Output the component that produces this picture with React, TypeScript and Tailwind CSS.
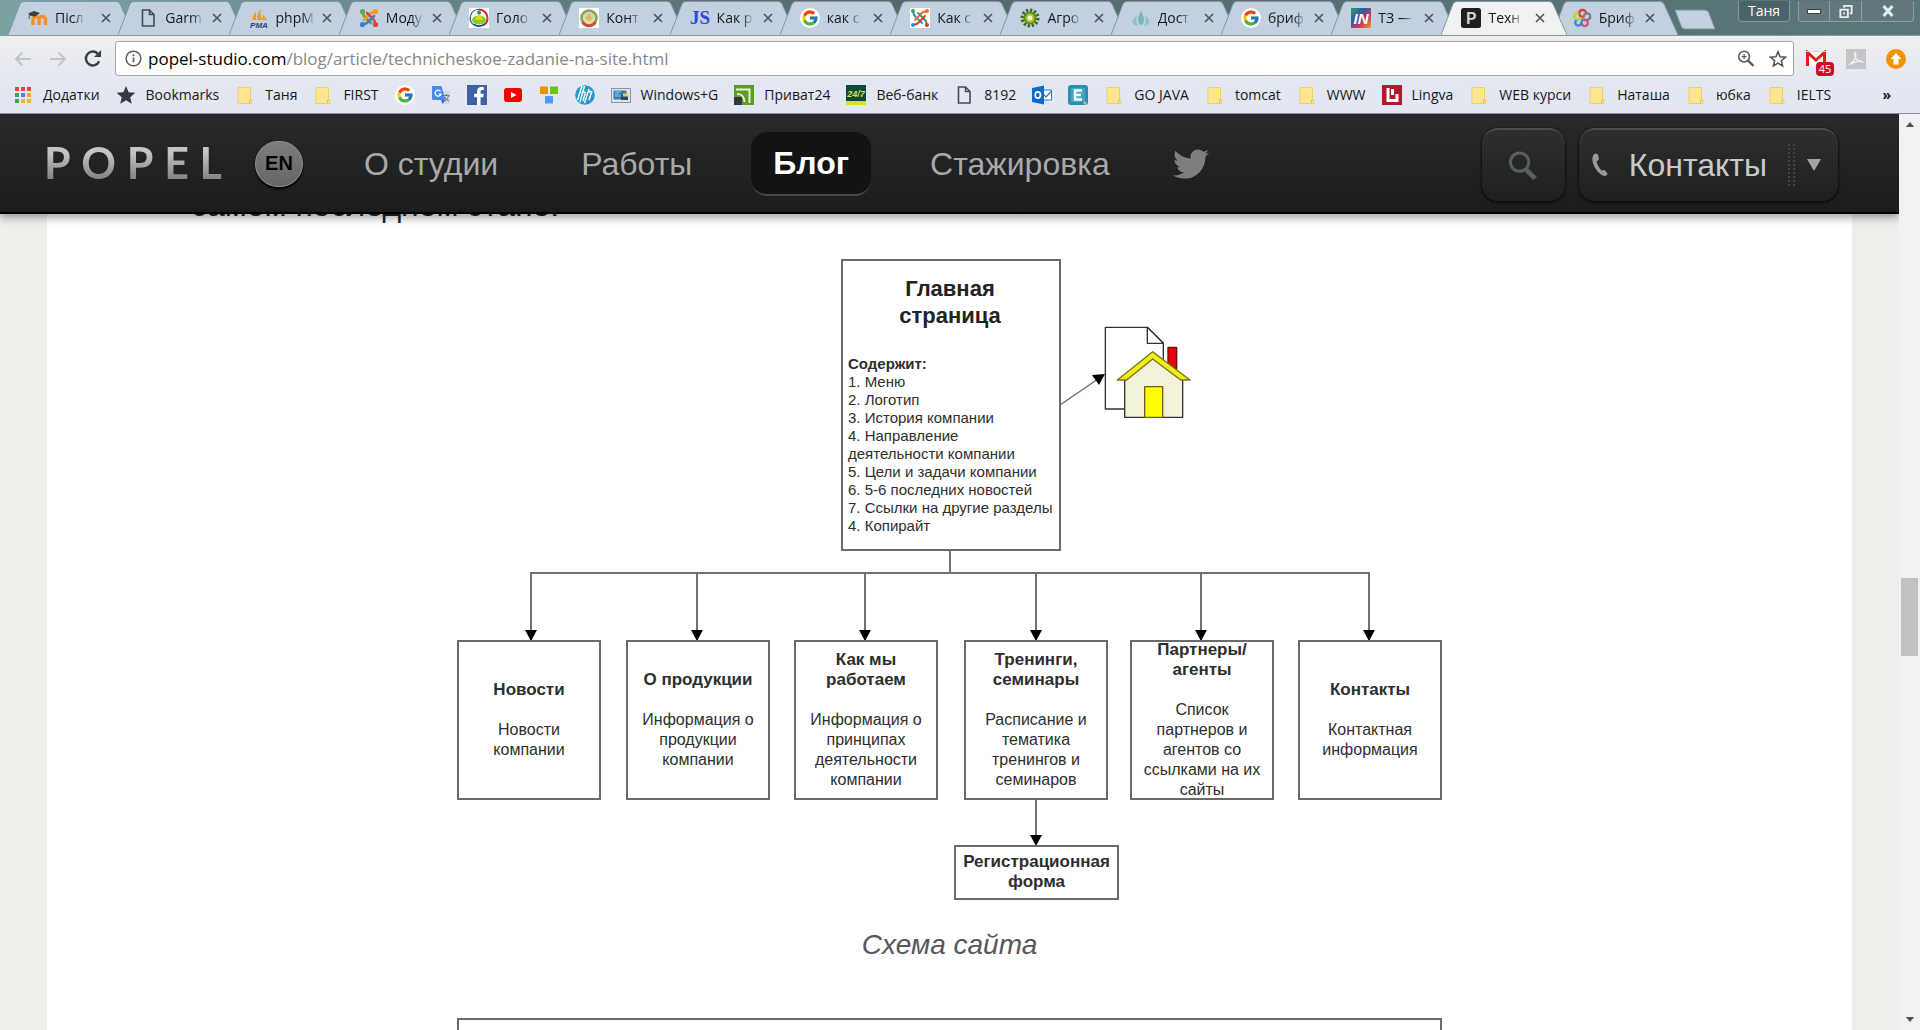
import type { ReactNode } from "react";
import { FcGoogle } from "react-icons/fc";
import { FaFacebookF, FaTwitter } from "react-icons/fa";

/* ---------- small site icons ---------- */

function Svg({ children, box = "0 0 20 20" }: { children: ReactNode; box?: string }) {
  return (
    <svg viewBox={box} className="h-5 w-5 shrink-0" aria-hidden="true">
      {children}
    </svg>
  );
}

const Moodle = () => (
  <Svg>
    <path d="M5 17V11.500C5 7.500 11 7.500 11 11.500V17M11 11.500C11 7.500 17.500 7.500 17.500 11.500V17" fill="none" stroke="#f68e2c" strokeWidth="3.400" />
    <path d="M0 5.500 6 3l6 2-5 3.500L3 8z" fill="#3d3d3d" />
    <path d="M1.500 6 1 11" stroke="#555" strokeWidth="1" />
  </Svg>
);

const Doc = () => (
  <Svg>
    <path d="M4.500 2h7l4.500 4.500V18H4.500zM11.500 2v4.500H16" fill="none" stroke="#454b52" strokeWidth="1.600" />
  </Svg>
);

const Pma = () => (
  <Svg>
    <path d="M3 12C4 7 6 5 7 4v8zM8 12c0-6 2-9 4-11-1 5 0 8 1 11zM13 12c0-3 1-5 2-6 0 3 2 4 3 6z" fill="#f7972b" />
    <text x="10" y="19.500" textAnchor="middle" className="fill-[#33397a] font-['Liberation_Sans'] text-[8px] font-bold italic">PMA</text>
  </Svg>
);

const Joomla = () => (
  <Svg>
    <g fill="none" strokeWidth="2.600" strokeLinecap="round">
      <path d="M4 4.500C4 8 5.500 8.500 12 15" stroke="#5fa843" />
      <path d="M15.500 4C12 4 11.500 5.500 5 12" stroke="#f59a23" />
      <path d="M16 15.500C16 12 14.500 11.500 8 5" stroke="#e8432e" />
      <path d="M4.500 16C8 16 8.500 14.500 15 8" stroke="#3b7fc4" />
    </g>
    <circle cx="3.500" cy="3.500" r="2.600" fill="#5fa843" />
    <circle cx="16.500" cy="3.500" r="2.600" fill="#f59a23" />
    <circle cx="16.500" cy="16.500" r="2.600" fill="#e8432e" />
    <circle cx="3.500" cy="16.500" r="2.600" fill="#3b7fc4" />
  </Svg>
);

const JoomlaWhite = () => (
  <Svg>
    <path d="M0 0h20v20H0z" fill="#fff" />
    <g fill="none" strokeWidth="1.900" strokeLinecap="round">
      <path d="M3.500 4.500C3.500 8 5 8 12 15" stroke="#2f8fd0" />
      <path d="M15.500 3.500C12 3.500 12 5 5 12" stroke="#ef6b2f" />
      <path d="M16.500 15.500C16.500 12 15 12 8 5" stroke="#3f9e50" />
      <path d="M4.500 16.500C8 16.500 8 15 15 8" stroke="#d83a2d" />
    </g>
    <circle cx="3" cy="3" r="2" fill="#3f9e50" />
    <circle cx="17" cy="3" r="2" fill="#ef6b2f" />
    <circle cx="17" cy="17" r="2" fill="#d83a2d" />
    <circle cx="3" cy="17" r="2" fill="#2f8fd0" />
  </Svg>
);

const School = () => (
  <Svg>
    <path d="M0 0h20v20H0z" fill="#fff" />
    <path d="M10 1.500a8.500 8.500 0 0 1 8.500 8.500c0 3-2 6-4 7" fill="none" stroke="#e2251d" strokeWidth="2" />
    <path d="M10 1.500A8.500 8.500 0 0 0 5 17" fill="none" stroke="#2b5a86" strokeWidth="1.200" />
    <ellipse cx="10" cy="12" rx="7" ry="4.500" fill="#7fd02b" />
    <path d="M6 12l4-7 4 7z" fill="#f2d21c" />
    <circle cx="10" cy="4.500" r="2" fill="#1f9a46" />
    <path d="M5 16.500c3 2 7 2 10 0" stroke="#28357c" strokeWidth="1.600" fill="none" />
  </Svg>
);

const Emblem = () => (
  <Svg>
    <path d="M0 0h20v20H0z" fill="#fff" />
    <circle cx="10" cy="10" r="7.500" fill="#e9dca0" stroke="#8aa34a" strokeWidth="2.600" />
    <path d="M3.500 14c3 5 10 5 13 0" fill="none" stroke="#c2543d" strokeWidth="3" />
    <circle cx="10" cy="9" r="4.200" fill="#bcd4c4" />
    <path d="M7 10l3-4 3 4-3 3z" fill="#e7b34e" />
  </Svg>
);

const JsIcon = () => (
  <Svg>
    <text x="10" y="16" textAnchor="middle" className="fill-[#3347d6] font-['Liberation_Serif'] text-[19px] font-bold">JS</text>
  </Svg>
);

const Google = () => (
  <span className="flex h-5 w-5 shrink-0 items-center justify-center rounded-full bg-white">
    <FcGoogle className="h-[18px] w-[18px]" />
  </span>
);

const Agro = () => (
  <Svg>
    <circle cx="10" cy="10" r="7.500" fill="none" stroke="#3f6a1c" strokeWidth="4" strokeDasharray="2.200 1.700" />
    <circle cx="10" cy="10" r="6.500" fill="#5d8c22" />
    <circle cx="10" cy="10" r="4.500" fill="#a8c83a" />
    <circle cx="10" cy="10" r="2.400" fill="#f6f3d0" />
  </Svg>
);

const Drop = () => (
  <Svg>
    <path d="M10 2c1 4 3 6 3 9s-1 6-3 6-3-3-3-6 2-5 3-9z" fill="#7db5b9" />
    <path d="M6 8c-3 2-5 4-4 7 1 2 3 3 5 3-2-3-2-6-1-10zM14 8c3 2 5 4 4 7-1 2-3 3-5 3 2-3 2-6 1-10z" fill="#8fc0c6" />
  </Svg>
);

const InIcon = () => (
  <Svg>
    <defs>
      <linearGradient id="in" x1="0" y1="0" x2="1" y2="1">
        <stop offset="0" stopColor="#2f9e6b" />
        <stop offset=".35" stopColor="#2a5fa8" />
        <stop offset=".65" stopColor="#c33a5a" />
        <stop offset="1" stopColor="#f09a25" />
      </linearGradient>
    </defs>
    <path d="M0 0h20v20H0z" fill="url(#in)" />
    <text x="10" y="15.500" textAnchor="middle" className="fill-white font-['Liberation_Sans'] text-[15px] font-bold italic">IN</text>
  </Svg>
);

const PopelIcon = () => (
  <Svg>
    <rect width="20" height="20" rx="2.500" fill="#1d1f20" />
    <text x="10" y="16" textAnchor="middle" className="fill-[#d6d6d6] font-['Lato'] text-[17px] font-bold">P</text>
  </Svg>
);

const Swirl = () => (
  <Svg>
    <g fill="none" strokeWidth="2.300" strokeLinecap="round">
      <path d="M10 9C6 7 6.500 2.500 10 2c2.500-.2 4 1 4 3" stroke="#e23b32" />
      <path d="M11.500 9c1-4.500 5.500-4.500 6.500-1.500.6 2-.5 3.500-2 4" stroke="#777c86" />
      <path d="M11.500 11.500c4.500 0 5.500 4 3 6-1.500 1-3.500.5-4.500-1" stroke="#e24a7a" />
      <path d="M10 12c.5 4.500-3 6.500-5.500 5C3 16 2.800 14 4 12.500" stroke="#3f84d8" />
      <path d="M9 10.500C5 13 1.500 10 2 7.500c.5-2 2.500-2.700 4-2" stroke="#c5cf2a" />
    </g>
  </Svg>
);

/* ---------- bookmark icons ---------- */

const Apps = () => (
  <Svg>
    <g fill="#e8453c"><path d="M2 2h4v4H2zM8 2h4v4H8zM14 2h4v4h-4z" /></g>
    <path d="M2 8h4v4H2z" fill="#3aa757" /><path d="M8 8h4v4H8z" fill="#4285f4" /><path d="M14 8h4v4h-4z" fill="#f5a623" />
    <path d="M2 14h4v4H2z" fill="#3aa757" /><path d="M8 14h4v4H8zM14 14h4v4h-4z" fill="#f5b32b" />
  </Svg>
);

const StarSolid = () => (
  <Svg>
    <path d="M10 1l2.600 6.300 6.800.5-5.200 4.400 1.600 6.600L10 15.300l-5.800 3.500 1.600-6.600L.6 7.800l6.800-.5z" fill="#333a42" />
  </Svg>
);

const Folder = () => (
  <Svg>
    <path d="M3 2.500h12.500v12l1.500.5v3.500H3z" fill="#fde592" stroke="#efcf68" />
    <path d="M14.500 18.500v-3.500h2" fill="none" stroke="#e8c14c" />
  </Svg>
);

const Translate = () => (
  <Svg>
    <path d="M9 6h10v13h-6z" fill="#d5d8dc" />
    <path d="M1 1h9.500l4 14H2.500A1.500 1.500 0 0 1 1 13.500z" fill="#4b87ee" />
    <path d="M10 15h4.500L11.500 19z" fill="#3367d6" />
    <path d="M9.600 6.400A3 3 0 1 0 10 9H7.500" fill="none" stroke="#fff" strokeWidth="1.200" />
    <path d="M12.500 10.500h6M15.500 9v1.500M17.500 10.500c-.5 3-2 4.500-3.500 5.500M14 12c1 2 2.500 3.500 4 4" fill="none" stroke="#6f7680" />
  </Svg>
);

const Facebook = () => (
  <span className="flex h-5 w-5 shrink-0 items-end justify-center overflow-hidden bg-[#4060a6] pl-1 text-white">
    <FaFacebookF className="h-[18px] w-4" />
  </span>
);

const Youtube = () => (
  <Svg>
    <rect x="1" y="3" width="18" height="14" rx="3" fill="#f60000" />
    <path d="M8 7l5.500 3L8 13z" fill="#fff" />
  </Svg>
);

const Squares = () => (
  <Svg>
    <path d="M1 1.500h8v7.500H1z" fill="#ff8a00" /><path d="M11 1.500h8v7.500h-8z" fill="#6cc516" /><path d="M6 11h8v7.500H6z" fill="#4f9cf5" />
  </Svg>
);

const Hp = () => (
  <Svg>
    <circle cx="10" cy="10" r="9.800" fill="#2b97cc" />
    <path d="M7 1 2.500 15M9.500 1 5 17M6.500 8c2.500-2 4-1 3.500 1L8 16M14 4l-4.500 14M17 6l-3 9M12 8c2.500-2 5-2 4.500 0" fill="none" stroke="#fff" strokeWidth="1.400" />
  </Svg>
);

const Monitor = () => (
  <Svg>
    <rect x=".5" y="3.500" width="19" height="14" fill="#dfe3e6" stroke="#8e969d" />
    <path d="M2.500 5.500h13v9h-13z" fill="#2f7fb4" />
    <path d="M4 7h6M4 9h4M4 11h6" stroke="#9cd0ee" />
    <path d="M10 10h7v5h-7z" fill="#254f77" /><path d="M12 8.500h5v3h-5z" fill="#f0c64a" />
  </Svg>
);

const Privat = () => (
  <Svg>
    <path d="M0 0h20v20H0z" fill="#5d9b27" />
    <path d="M2 4.500h13.500V18M3 9c5 0 7 2 7.500 8" fill="none" stroke="#e6f2d4" strokeWidth="2" />
    <path d="M0 12h8v8H0z" fill="#33383c" />
  </Svg>
);

const Bank247 = () => (
  <Svg>
    <path d="M0 0h20v16H0z" fill="#0d4a3c" /><path d="M0 16h20v4H0z" fill="#dbe320" />
    <text x="10" y="11.500" textAnchor="middle" className="fill-[#d6e04a] font-['Liberation_Sans'] text-[9px] font-bold italic">24/7</text>
  </Svg>
);

const Outlook = () => (
  <Svg>
    <path d="M9 5h10.500v10H9z" fill="#fff" stroke="#2b7bd0" /><path d="M10 7l4 5 5.500-6" fill="none" stroke="#2b7bd0" strokeWidth="1.200" />
    <path d="M0 3l12-2.500v19L0 17z" fill="#0a6cc9" />
    <ellipse cx="5.800" cy="10" rx="2.600" ry="3.200" fill="none" stroke="#fff" strokeWidth="1.700" />
  </Svg>
);

const EIcon = () => (
  <Svg>
    <rect width="20" height="20" rx="3" fill="#2a8fae" />
    <path d="M3 3h14v14H3z" fill="#48a6c0" />
    <path d="M14 5.500H7v9h7M7 10h6" fill="none" stroke="#fff" strokeWidth="2.400" />
    <circle cx="17" cy="18" r="1.600" fill="#e7a3b4" />
  </Svg>
);

const Lingvo = () => (
  <Svg>
    <path d="M0 0h20v20H0z" fill="#b5172c" />
    <path d="M6 3v12.500h10.500M15 9v8M10.500 4v6" fill="none" stroke="#fff" strokeWidth="3" />
  </Svg>
);

/* ---------- browser chrome ---------- */

const tabs: { title: string; icon: ReactNode; active?: boolean }[] = [
  { title: "Післ", icon: <Moodle /> },
  { title: "Garm", icon: <Doc /> },
  { title: "phpM", icon: <Pma /> },
  { title: "Моду", icon: <Joomla /> },
  { title: "Голо", icon: <School /> },
  { title: "Конт", icon: <Emblem /> },
  { title: "Как р", icon: <JsIcon /> },
  { title: "как с", icon: <Google /> },
  { title: "Как с", icon: <JoomlaWhite /> },
  { title: "Агро", icon: <Agro /> },
  { title: "Дост", icon: <Drop /> },
  { title: "бриф", icon: <Google /> },
  { title: "ТЗ —", icon: <InIcon /> },
  { title: "Техн", icon: <PopelIcon />, active: true },
  { title: "Бриф", icon: <Swirl /> },
];

function Tab({ title, icon, active }: { title: string; icon: ReactNode; active?: boolean }) {
  return (
    <li className={active ? "relative z-10 flex h-[34px] min-w-0 flex-1 items-center" : "relative flex h-[34px] min-w-0 flex-1 items-center"}>
      <svg viewBox="0 0 126 34" preserveAspectRatio="none" className="absolute top-0 left-0 h-[34px] w-[126px]" aria-hidden="true">
        <path
          d="M0 34 12 3Q13 .5 16 .5H108Q111 .5 112 3L126 34"
          fill={active ? "#f0f1f1" : "#c1d1e0"}
          stroke={active ? "#8b979e" : "#8496a3"}
        />
      </svg>
      <button type="button" className="relative flex flex-1 items-center pl-5 text-left">
        {icon}
        <span className="ml-[7px] bg-linear-to-r from-[#15181b] from-70% to-[#a9b5c1] bg-clip-text text-sm leading-5 whitespace-nowrap text-transparent">{title}</span>
      </button>
      <button type="button" aria-label={"Закрити " + title} className="relative mr-1.5 flex h-4 w-3 items-center justify-center">
        <svg viewBox="0 0 10 10" className="h-2.5 w-2.5 shrink-0"><path d="M1 1l8 8M9 1 1 9" stroke="#4c535a" strokeWidth="1.600" /></svg>
      </button>
    </li>
  );
}

function TabStrip() {
  return (
    <div className="flex h-[35px] shrink-0 items-start bg-linear-to-r from-[#7ba3a3] from-0% via-[#54686b] via-45% to-[#5a777b] pt-px pl-2">
      <ul className="flex w-[1654px]">
        {tabs.map((t, i) => (
          <Tab key={i} {...t} />
        ))}
      </ul>
      <button type="button" aria-label="Нова вкладка" className="mt-2 ml-3">
        <svg viewBox="0 0 42 21" className="h-[21px] w-[42px]"><path d="M1 1h30q3 0 4 3l6 16H11q-3 0-4-3z" fill="#c1d1df" stroke="#7f9199" /></svg>
      </button>
      <div className="ml-auto flex items-start pr-1.5">
        <button type="button" className="h-[21px] w-[52px] rounded-b border border-t-0 border-[#87999c] bg-[#4b6267] text-sm leading-5 text-white">Таня</button>
        <div className="ml-2 flex h-[21px] rounded-b border border-t-0 border-[#8fa0a3] bg-[#62787c]">
          <button type="button" aria-label="Згорнути" className="flex w-[31px] items-center justify-center border-r border-[#8fa0a3]">
            <span className="h-[5px] w-3.5 border border-[#3b4649] bg-white" />
          </button>
          <button type="button" aria-label="Розгорнути" className="flex w-8 items-center justify-center border-r border-[#8fa0a3]">
            <svg viewBox="0 0 16 16" className="h-[15px] w-4"><g fill="none" stroke="#e8eded" strokeWidth="2"><path d="M6 4V2h8v8h-2" /><path d="M2 6h8v8H2z" /></g><path d="M5 9h2v2H5z" fill="#e8eded" /></svg>
          </button>
          <button type="button" aria-label="Закрити" className="flex w-[51px] items-center justify-center">
            <svg viewBox="0 0 14 14" className="h-3.5 w-3.5"><path d="M2.500 2l9 10M11.500 2l-9 10" stroke="#e8eded" strokeWidth="3" /></svg>
          </button>
        </div>
      </div>
    </div>
  );
}

function AddressBar() {
  return (
    <div className="flex h-[45px] items-center">
      <button type="button" aria-label="Назад" className="ml-3.5 flex w-[18px] justify-center">
        <svg viewBox="0 0 18 16" className="h-4 w-[18px]"><path d="M17 8H2M8.500 1.500 2 8l6.500 6.500" fill="none" stroke="#c3c5c8" strokeWidth="2" /></svg>
      </button>
      <button type="button" aria-label="Уперед" className="ml-[17px] flex w-[18px] justify-center">
        <svg viewBox="0 0 18 16" className="h-4 w-[18px]"><path d="M1 8h15M9.500 1.500 16 8l-6.500 6.500" fill="none" stroke="#c3c5c8" strokeWidth="2" /></svg>
      </button>
      <button type="button" aria-label="Оновити" className="ml-4 flex w-5 justify-center">
        <svg viewBox="0 0 20 20" className="h-[19px] w-5"><path d="M16.500 13A7.300 7.300 0 1 1 15 4.800" fill="none" stroke="#3d4145" strokeWidth="2.600" /><path d="M18.500 1v7.500H11z" fill="#3d4145" /></svg>
      </button>
      <div className="ml-3 flex h-[35px] flex-1 items-center rounded-[3px] border border-[#a4a7ab] bg-white pr-1.5 pl-[9px]">
        <svg viewBox="0 0 18 18" className="h-[17px] w-[17px] shrink-0" aria-hidden="true"><circle cx="9" cy="9" r="7.800" fill="none" stroke="#5a5a5a" strokeWidth="1.600" /><path d="M9 8v5M9 4.500v2" stroke="#5a5a5a" strokeWidth="1.800" /></svg>
        <a href="#top" className="ml-1.5 flex-1 text-[17px] leading-6 whitespace-nowrap text-[#85888b]">
          <span className="text-black">popel-studio.com</span>/blog/article/technicheskoe-zadanie-na-site.html
        </a>
        <button type="button" aria-label="Масштаб">
          <svg viewBox="0 0 18 18" className="h-[17px] w-[18px]"><g fill="none" stroke="#55595d"><circle cx="7" cy="7" r="5.700" strokeWidth="1.700" /><path d="M4.500 7h5M7 4.500v5" strokeWidth="1.300" /><path d="M11 11l6 6" strokeWidth="2.400" /></g></svg>
        </button>
        <button type="button" aria-label="Додати закладку" className="ml-3.5">
          <svg viewBox="0 0 20 20" className="h-[18px] w-[18px]"><path d="M10 2l2.300 5.500 6 .5-4.600 3.900 1.400 5.800L10 14.600l-5.100 3.100 1.400-5.800L1.700 8l6-.5z" fill="none" stroke="#4f5357" strokeWidth="1.700" /></svg>
        </button>
      </div>
      <div className="flex w-[126px] items-center pl-3">
        <button type="button" aria-label="Gmail: 45" className="relative">
          <svg viewBox="0 0 20 15" className="h-[17px] w-5"><path d="M0 0h20v15H0z" fill="#fff" /><path d="M1.500 15V1.500L10 9l8.500-7.500V15" fill="none" stroke="#dc2018" strokeWidth="3" /><path d="M0 .5h20" stroke="#d8d8d8" /></svg>
          <span className="absolute top-3 left-2.5 h-[14px] w-[18px] rounded-sm bg-[#cf0c24] text-center text-[11px] leading-[14px] text-white">45</span>
        </button>
        <button type="button" aria-label="PDF" className="ml-5">
          <svg viewBox="0 0 20 20" className="h-5 w-5"><path d="M0 0h20v20H0z" fill="#c3c4c6" /><path d="M3 16c6-4 8-9 6.500-12-1-1-1.500 1-.5 3.500 2 4 5 5.500 8 5.500-3-2-9 0-12 2" fill="none" stroke="#eee" strokeWidth="1.300" /></svg>
        </button>
        <button type="button" aria-label="Оновлення" className="ml-5">
          <svg viewBox="0 0 20 20" className="h-5 w-5"><circle cx="10" cy="10" r="10" fill="#f39200" /><path d="M10 4l5.500 6H12.500v5.500h-5V10h-3z" fill="#fff" /></svg>
        </button>
      </div>
    </div>
  );
}

const bookmarks: { label?: string; name?: string; icon: ReactNode }[] = [
  { label: "Додатки", icon: <Apps /> },
  { label: "Bookmarks", icon: <StarSolid /> },
  { label: "Таня", icon: <Folder /> },
  { label: "FIRST", icon: <Folder /> },
  { name: "Google", icon: <Google /> },
  { name: "Translate", icon: <Translate /> },
  { name: "Facebook", icon: <Facebook /> },
  { name: "YouTube", icon: <Youtube /> },
  { name: "Tiles", icon: <Squares /> },
  { name: "HP", icon: <Hp /> },
  { label: "Windows+G", icon: <Monitor /> },
  { label: "Приват24", icon: <Privat /> },
  { label: "Веб-банк", icon: <Bank247 /> },
  { label: "8192", icon: <Doc /> },
  { name: "Outlook", icon: <Outlook /> },
  { name: "E", icon: <EIcon /> },
  { label: "GO JAVA", icon: <Folder /> },
  { label: "tomcat", icon: <Folder /> },
  { label: "WWW", icon: <Folder /> },
  { label: "Lingva", icon: <Lingvo /> },
  { label: "WEB курси", icon: <Folder /> },
  { label: "Наташа", icon: <Folder /> },
  { label: "юбка", icon: <Folder /> },
  { label: "IELTS", icon: <Folder /> },
];

function BookmarksBar() {
  return (
    <nav aria-label="Закладки" className="flex h-[27px] items-center gap-4 pr-[29px] pl-[13px] text-sm leading-5 whitespace-nowrap text-[#15181b]">
      {bookmarks.map((b, i) => (
        <a key={i} href="#top" aria-label={b.label ?? b.name} className="flex items-center gap-2.5">
          {b.icon}
          {b.label && <span>{b.label}</span>}
        </a>
      ))}
      <button type="button" aria-label="Інші закладки" className="ml-auto font-bold">»</button>
    </nav>
  );
}

/* ---------- site header ---------- */

function SiteHeader() {
  return (
    <header className="absolute inset-x-0 top-0 z-10 flex h-[100px] items-center border-b-2 border-black bg-linear-to-b from-[#27292b] to-[#1b1c1d] pt-0.5 pr-[61px] pl-11 font-['Liberation_Sans',sans-serif] text-[32px] text-[#a9a9a9] shadow-[0_4px_8px_rgba(0,0,0,0.35)]">
      <a href="#top" aria-label="POPEL" className="flex w-[178px] justify-between bg-linear-to-b from-[#c4c4c4] from-30% to-[#858789] to-75% bg-clip-text pb-0.5 font-['Lato',sans-serif] text-[43px] leading-[52px] font-bold text-transparent">
        <span>P</span><span>O</span><span>P</span><span>E</span><span>L</span>
      </a>
      <a href="#top" className="ml-[33px] flex h-[46px] w-12 items-center justify-center rounded-full border border-[#8f9192] bg-linear-to-b from-[#7c7e7f] to-[#636566] pb-0.5 text-xl font-bold text-black shadow-[0_2px_2px_#000]">EN</a>
      <nav aria-label="Меню" className="ml-[37px] flex items-center gap-[35px]">
        <a href="#top" className="px-6">О студии</a>
        <a href="#top" className="px-6">Работы</a>
        <a href="#top" className="flex h-16 items-center rounded-2xl border-b-2 border-[#45484a] bg-[#111314] px-[22px] font-bold text-white">Блог</a>
        <a href="#top" className="px-6">Стажировка</a>
        <a href="#top" aria-label="Twitter" className="ml-1"><FaTwitter className="h-9 w-9 text-[#7d7f80]" /></a>
      </nav>
      <div className="ml-auto flex gap-3.5">
        <button type="button" aria-label="Поиск" className="flex h-[73px] w-[83px] items-center justify-center rounded-2xl border-t-2 border-[#4a4c4d] bg-linear-to-b from-[#2d2f30] to-[#1e201f] shadow-[0_1px_2px_1px_#0c0d0d]">
          <svg viewBox="0 0 30 30" className="h-[29px] w-[30px]"><circle cx="11.500" cy="11.500" r="9.500" fill="none" stroke="#5c5f60" strokeWidth="3" /><path d="M18.500 19.500l9 9" stroke="#5c5f60" strokeWidth="5" /></svg>
        </button>
        <button type="button" className="flex h-[73px] items-center rounded-2xl border-t-2 border-[#4a4c4d] bg-linear-to-b from-[#2d2f30] to-[#1e201f] pr-[17px] pl-3 text-[#cacaca] shadow-[0_1px_2px_1px_#0c0d0d]">
          <svg viewBox="0 0 18 25" className="h-6 w-[18px]"><path d="M2.500 1.500Q5-.5 7 2L8 6.500Q7 8 5.500 8.500 6.500 14 11 18.500q1.500-1 3-.5l3 3.500Q16 25 12 23.500C5 20-2 8 2.500 1.500z" fill="#97999a" /></svg>
          <span className="ml-5">Контакты</span>
          <svg viewBox="0 0 10 42" className="ml-5 h-[42px] w-2.5"><path d="M2 0v42M7 0v42" stroke="#424546" strokeWidth="2" strokeDasharray="2 2" /></svg>
          <svg viewBox="0 0 14 12" className="ml-2.5 h-3 w-3.5"><path d="M0 0h14L7 12z" fill="#a2a4a4" /></svg>
        </button>
      </div>
    </header>
  );
}

/* ---------- site map diagram ---------- */

function Node({ place, title, lines }: { place: string; title: string[]; lines: string[] }) {
  return (
    <div className={place + " absolute top-[381px] flex h-[160px] w-36 flex-col items-center justify-center border-2 border-[#6a6a6a] whitespace-nowrap"}>
      {title.map((t) => <b key={t} className="text-[17px]">{t}</b>)}
      <div className="h-5 shrink-0" />
      {lines.map((t) => <span key={t}>{t}</span>)}
    </div>
  );
}

function Diagram() {
  return (
    <figure className="mx-auto w-[985px]">
      <div className="relative h-[641px] text-base leading-5 text-[#2e2e2e]">
        <svg viewBox="0 0 985 641" className="absolute inset-0 h-[641px] w-[985px]" aria-hidden="true">
          <g fill="none" stroke="#707070" strokeWidth="2">
            <path d="M493 292v22M74 382V314H912V382M240 314v67M408 314v67M579 314v67M744 314v67M579 541v44" />
            <path d="M603 146l38-26" strokeWidth="1.500" />
          </g>
          <g fill="#000">
            <path d="M68 371h12l-6 11zM234 371h12l-6 11zM402 371h12l-6 11zM573 371h12l-6 11zM738 371h12l-6 11zM906 371h12l-6 11zM573 576h12l-6 11z" />
            <path d="M648 115l-13 1 7 10z" />
          </g>
        </svg>
        <div className="absolute top-0 left-[384px] flex h-[292px] w-[220px] flex-col border-2 border-[#6a6a6a] px-[5px] pt-3.5 text-[15px] leading-[18px] whitespace-nowrap">
          <div className="mb-[26px] pr-0.5 text-center text-[22px] leading-[27px] font-bold text-[#222]">Главная<br />страница</div>
          <b>Содержит:</b>
          <span>1. Меню</span>
          <span>2. Логотип</span>
          <span>3. История компании</span>
          <span>4. Направление</span>
          <span>деятельности компании</span>
          <span>5. Цели и задачи компании</span>
          <span>6. 5-6 последних новостей</span>
          <span>7. Ссылки на другие разделы</span>
          <span>4. Копирайт</span>
        </div>
        <svg viewBox="846 255 270 285" className="absolute top-[66px] left-[645px] h-[95px] w-[90px]" aria-hidden="true">
          <g stroke="#333" strokeWidth="4" strokeLinejoin="round">
            <path d="M856 262H982L1030 310V507H856z" fill="#fff" />
            <path d="M982 262V310H1030z" fill="#fff" />
            <path d="M1044 322h26v66h-26z" fill="#e8000c" stroke="#7a0a0a" />
            <path d="M914 415 998 345 1088 415V532H914z" fill="#f2f2da" />
            <path d="M892 420 998 335 1110 420H1082L998 357 920 420z" fill="#f3ee12" stroke="#77741a" />
            <path d="M974 440h54v92h-54z" fill="#ff0" stroke="#66631a" />
          </g>
        </svg>
        <Node place="left-0" title={["Новости"]} lines={["Новости", "компании"]} />
        <Node place="left-[169px]" title={["О продукции"]} lines={["Информация о", "продукции", "компании"]} />
        <Node place="left-[337px]" title={["Как мы", "работаем"]} lines={["Информация о", "принципах", "деятельности", "компании"]} />
        <Node place="left-[507px]" title={["Тренинги,", "семинары"]} lines={["Расписание и", "тематика", "тренингов и", "семинаров"]} />
        <Node place="left-[673px]" title={["Партнеры/", "агенты"]} lines={["Список", "партнеров и", "агентов со", "ссылками на их", "сайты"]} />
        <Node place="left-[841px]" title={["Контакты"]} lines={["Контактная", "информация"]} />
        <div className="absolute top-[586px] left-[497px] flex h-[55px] w-[165px] flex-col items-center justify-center border-2 border-[#6a6a6a] pb-0.5 text-[17px] font-bold">
          <span>Регистрационная</span>
          <span>форма</span>
        </div>
      </div>
      <figcaption className="mt-[25px] text-center text-[28px] leading-10 text-[#55575a] italic">Схема сайта</figcaption>
    </figure>
  );
}

function ScrollBar() {
  return (
    <div className="flex w-[21px] shrink-0 flex-col items-center justify-between bg-[#f1f1f1] py-2" aria-hidden="true">
      <svg viewBox="0 0 10 6" className="h-[5px] w-2.5 shrink-0"><path d="M0 6l5-6 5 6z" fill="#505050" /></svg>
      <div className="flex w-full flex-1 flex-col items-center">
        <div className="basis-[451px]" />
        <div className="h-[78px] w-[17px] bg-[#c1c1c1]" />
      </div>
      <svg viewBox="0 0 10 6" className="h-[5px] w-2.5 shrink-0"><path d="M0 0l5 6 5-6z" fill="#505050" /></svg>
    </div>
  );
}

export default function App() {
  return (
    <div id="top" className="flex h-screen flex-col overflow-hidden bg-[#efeeea] font-['Open_Sans',sans-serif]">
      <TabStrip />
      <div className="h-[79px] shrink-0 border-t border-b border-t-[#8d999f] border-b-[#8a8d93] bg-linear-to-b from-[#efefef] to-[#e3e7f1] to-60%">
        <AddressBar />
        <BookmarksBar />
      </div>
      <div className="flex min-h-0 flex-1">
        <div className="relative min-w-0 flex-1 overflow-hidden">
          <SiteHeader />
          <article className="mx-[47px] h-full bg-white pt-[71px] font-['Liberation_Sans',sans-serif]">
            <p className="mb-[34px] pl-36 text-[32px] leading-10 text-[#222]">самом последнем этапе.</p>
            <Diagram />
            <div className="mx-auto mt-[53px] h-24 w-[985px] border-2 border-[#6a6a6a]" />
          </article>
        </div>
        <ScrollBar />
      </div>
    </div>
  );
}
